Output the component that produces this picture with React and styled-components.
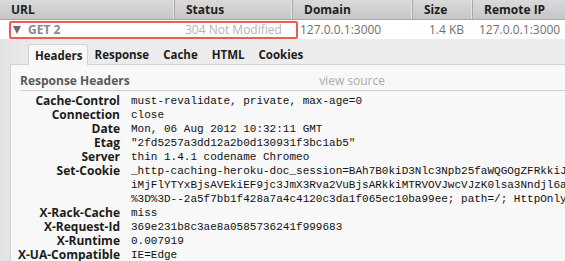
import React from "react";
import styled, { createGlobalStyle } from "styled-components";

const Global = createGlobalStyle`
   html, body {
      margin: 0;
      padding: 0;
      background: #ececec;
      overflow: hidden;
   }
   body {
      font-family: "Open Sans", "DejaVu Sans", sans-serif;
   }
`;

const columns = [
   { label: "URL", width: 175 },
   { label: "Status", width: 118 },
   { label: "Domain", width: 120 },
   { label: "Size", width: 60 },
   { label: "Remote IP", width: 92 },
];

const headers = [
   ["Cache-Control", ["must-revalidate, private, max-age=0"]],
   ["Connection", ["close"]],
   ["Date", ["Mon, 06 Aug 2012 10:32:11 GMT"]],
   ["Etag", ['"2fd5257a3dd12a2b0d130931f3bc1ab5"']],
   ["Server", ["thin 1.4.1 codename Chromeo"]],
   [
      "Set-Cookie",
      [
         "_http-caching-heroku-doc_session=BAh7B0kiD3Nlc3Npb25faWQGOgZFRkkiJ",
         "iMjFlYTYxBjsAVEkiEF9jc3JmX3Rva2VuBjsARkkiMTRVOVJwcVJzK0lsa3Nndjl6a",
         "%3D%3D--2a5f7bb1f428a7a4c4120c3da1f065ec10ba99ee; path=/; HttpOnly",
      ],
   ],
   ["X-Rack-Cache", ["miss"]],
   ["X-Request-Id", ["369e231b8c3ae8a0585736241f999683"]],
   ["X-Runtime", ["0.007919"]],
   ["X-UA-Compatible", ["IE=Edge"]],
];

const tabs = ["Headers", "Response", "Cache", "HTML", "Cookies"];

const App = () => {
   return (
      <Page>
         <Global />
         <HeadBar>
            {columns.map((c) => (
               <HeadCell key={c.label} $w={c.width}>
                  {c.label}
               </HeadCell>
            ))}
         </HeadBar>
         <Request>
            <Cell $w={175}>
               <Triangle />
               <Method>GET 2</Method>
            </Cell>
            <Cell $w={118} $pad={10} $muted>
               304 Not Modified
            </Cell>
            <Cell $w={120} $pad={7}>
               127.0.0.1:3000
            </Cell>
            <Cell $w={60} $pad={16}>
               1.4 KB
            </Cell>
            <Cell $w={92} $pad={6}>
               127.0.0.1:3000
            </Cell>
            <Highlight />
         </Request>
         <TabBar>
            {tabs.map((t, i) => (
               <Tab key={t} $active={i === 0}>
                  {t}
               </Tab>
            ))}
         </TabBar>
         <Panel>
            <SectionTitle>
               <span>Response Headers</span>
               <ViewSource>view source</ViewSource>
            </SectionTitle>
            <HeaderList>
               {headers.map(([key, lines]) => (
                  <HeaderRow key={key}>
                     <Key>
                        <span>{key}</span>
                     </Key>
                     <Value>
                        {lines.map((l) => (
                           <div key={l}>{l}</div>
                        ))}
                     </Value>
                  </HeaderRow>
               ))}
            </HeaderList>
         </Panel>
      </Page>
   );
};

const Page = styled.div`
   width: 565px;
   height: 261px;
   overflow: hidden;
   background: linear-gradient(to right, #e2e2e2 0px, #ececec 40px);
`;

const HeadBar = styled.div`
   display: flex;
   height: 20px;
   background: linear-gradient(#dadada, #c6c6c6);
   border-bottom: 1px solid #a8a8a8;
   box-sizing: border-box;
`;

const HeadCell = styled.div`
   width: ${(p) => p.$w}px;
   flex: none;
   box-sizing: border-box;
   padding-left: 11px;
   font-size: 12px;
   font-weight: bold;
   line-height: 19px;
   color: #1e1e1e;
   white-space: nowrap;
   border-right: 1px solid #a9a9a9;
   box-shadow: inset -1px 0 0 #e6e6e6;
   &:last-child {
      border-right: none;
      box-shadow: none;
   }
`;

const Request = styled.div`
   position: relative;
   display: flex;
   align-items: center;
   height: 19px;
   background: #fff;
   font-size: 12px;
`;

const Cell = styled.div`
   width: ${(p) => p.$w}px;
   flex: none;
   box-sizing: border-box;
   display: flex;
   align-items: center;
   padding-left: ${(p) => (p.$pad !== undefined ? p.$pad : 13)}px;
   color: ${(p) => (p.$muted ? "#b4b4b4" : "#707070")};
   white-space: nowrap;
`;

const Triangle = styled.span`
   width: 0;
   height: 0;
   border-left: 4px solid transparent;
   border-right: 4px solid transparent;
   border-top: 8px solid #6a6a6a;
   margin-right: 7px;
`;

const Method = styled.span`
   font-weight: bold;
   color: #8a8a8a;
`;

const Highlight = styled.div`
   position: absolute;
   left: 9px;
   top: 1px;
   width: 289px;
   height: 18px;
   box-sizing: border-box;
   border: 2px solid #ef5b55;
   border-radius: 2px;
   pointer-events: none;
`;

const TabBar = styled.div`
   display: flex;
   align-items: flex-end;
   height: 25px;
   padding-left: 28px;
   box-sizing: border-box;
`;

const Tab = styled.div`
   height: 21px;
   box-sizing: border-box;
   padding: ${(p) => (p.$active ? "0 4px 0 6px" : "0 6px")};
   font-size: 11.5px;
   font-weight: bold;
   line-height: 21px;
   color: #1c1c1c;
   background: ${(p) => (p.$active ? "#f8f8f8" : "transparent")};
   border: 1px solid ${(p) => (p.$active ? "#d2d2d2" : "transparent")};
   border-bottom: none;
   border-radius: 3px 3px 0 0;
   margin-bottom: ${(p) => (p.$active ? "-1px" : "0")};
   position: relative;
`;

const Panel = styled.div`
   margin-left: 10px;
   background: #f8f8f8;
   border-top: 1px solid #d2d2d2;
   border-left: 1px solid #d2d2d2;
   padding: 7px 0 0 9px;
   height: 200px;
`;

const SectionTitle = styled.div`
   display: flex;
   align-items: center;
   height: 17px;
   padding-bottom: 1px;
   border-bottom: 1px solid #cfcfcf;
   font-size: 12px;
   font-weight: bold;
   color: #5a5a5a;
`;

const ViewSource = styled.span`
   margin-left: auto;
   margin-right: 180px;
   font-weight: normal;
   color: #ababab;
`;

const HeaderList = styled.div`
   padding-top: 3px;
`;

const HeaderRow = styled.div`
   display: flex;
   align-items: flex-start;
`;

const Key = styled.div`
   width: 100px;
   flex: none;
   display: flex;
   justify-content: flex-end;
   white-space: nowrap;
   font-size: 12px;
   font-weight: bold;
   line-height: 14px;
   color: #1c1c1c;
`;

const Value = styled.div`
   margin-left: 11px;
   font-family: "Liberation Mono", monospace;
   font-size: 11px;
   line-height: 14px;
   color: #111;
   white-space: pre;
`;

export default App;
